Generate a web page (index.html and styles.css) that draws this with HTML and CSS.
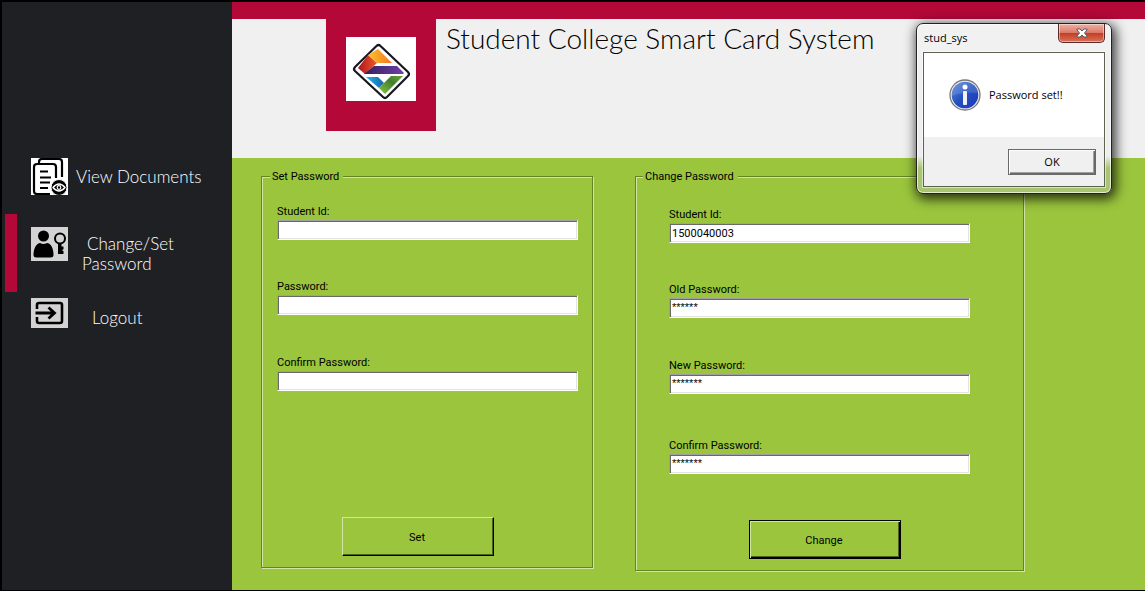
FILE: index.html
```html
<!DOCTYPE html>
<html lang="en">
<head>
<meta charset="utf-8">
<title>Student College Smart Card System</title>
<link rel="stylesheet" href="styles.css">
</head>
<body>
<div class="app">
  <nav class="sidebar">
    <a class="nav-item" href="#documents">
      <svg class="nav-icon" width="37" height="37" viewBox="0 0 37 37" aria-hidden="true">
        <rect width="37" height="37" fill="#fff"/>
        <g fill="none" stroke="#000" stroke-width="2.2">
          <path d="M8 5V4q0-3 3-3h17q3 0 3 3v15"/>
          <path d="M25 20V9q0-3-3-3H6Q3 6 3 9v24q0 3 3 3h13"/>
          <path d="M9 13.500h8M9 19.500h11M9 24.500h10M9 30h8"/>
        </g>
        <circle cx="28" cy="29.500" r="8" fill="#000" stroke="#fff"/>
        <path d="M22 29.500q6-7 12 0q-6 7-12 0z" fill="none" stroke="#fff" stroke-width="1.400"/>
        <circle cx="28" cy="29.500" r="1.800" fill="none" stroke="#fff" stroke-width="1.200"/>
      </svg>
      <span class="nav-text nav-text-documents">View Documents</span>
    </a>
    <a class="nav-item active" href="#password" aria-current="page">
      <svg class="nav-icon" width="37" height="34" viewBox="0 0 37 34" aria-hidden="true">
        <rect width="37" height="34" fill="#d3d3d3"/>
        <circle cx="12.500" cy="9" r="5.500"/>
        <path d="M2.500 28c0-8 4-12 6.500-12q3.500 2 7 0c3 0 6.500 4 6.500 12q0 2.500-3 2.500h-14q-3 0-3-2.500z"/>
        <circle cx="29" cy="11.500" r="5" fill="none" stroke="#000" stroke-width="2"/>
        <path d="M27 17h3.500v2.500h2v3h-1v1.500h1v3H27z"/>
      </svg>
      <span class="nav-text nav-text-password">Change/Set Password</span>
    </a>
    <a class="nav-item" href="#logout">
      <svg class="nav-icon" width="37" height="30" viewBox="0 0 37 30" aria-hidden="true">
        <rect width="37" height="30" fill="#d3d3d3"/>
        <path d="M6 11V7q0-2 2-2h21q2 0 2 2v16q0 2-2 2H8q-2 0-2-2v-4" fill="none" stroke="#000" stroke-width="2.600"/>
        <path d="M4.500 15h19M17.500 9.500l6 5.500-6 5.500" fill="none" stroke="#000" stroke-width="2.800"/>
      </svg>
      <span class="nav-text nav-text-logout">Logout</span>
    </a>
  </nav>

  <div class="content">
    <header class="header">
      <div class="logo">
        <svg width="70" height="64" viewBox="0 0 70 64" role="img" aria-label="College logo">
          <defs>
            <linearGradient id="red"><stop stop-color="#b0121d"/><stop offset="1" stop-color="#ee5a2a"/></linearGradient>
            <linearGradient id="orange"><stop stop-color="#fdc02e"/><stop offset="1" stop-color="#f47721"/></linearGradient>
            <linearGradient id="purple"><stop stop-color="#30205e"/><stop offset="1" stop-color="#7140a8"/></linearGradient>
            <linearGradient id="blue"><stop stop-color="#22b5ef"/><stop offset="1" stop-color="#1464a8"/></linearGradient>
            <linearGradient id="green" x1="0" y1="1" x2="1" y2="0"><stop stop-color="#8ac43f"/><stop offset=".6" stop-color="#40802d"/><stop offset="1" stop-color="#70a33a"/></linearGradient>
          </defs>
          <rect width="70" height="64" fill="#fff"/>
          <path d="M30.500 9q2-2 4 0L62 35q2 2 0 4L41 60q-2 2-4 0L9 34q-2-2 0-4z" fill="#fff" stroke="#171621" stroke-width="2.200"/>
          <path d="M22 18l9 8L19 37l-7-6z" fill="url(#red)"/>
          <path d="M22 18l10-6 14 14H31z" fill="url(#orange)"/>
          <path d="M28 29h23l7 7-1 1H18z" fill="url(#purple)"/>
          <path d="M20 40h12l6 6-5 5z" fill="url(#blue)"/>
          <path d="M45 39h12L39 57l-6-6z" fill="url(#green)"/>
        </svg>
      </div>
      <h1 class="title">Student College Smart Card System</h1>
    </header>

    <main class="panels">
      <form class="panel-form">
        <fieldset class="panel panel-set">
          <legend>Set Password</legend>
          <div class="field"><label for="set-id">Student Id:</label><input id="set-id" type="text"></div>
          <div class="field"><label for="set-pass">Password:</label><input id="set-pass" type="password"></div>
          <div class="field"><label for="set-confirm">Confirm Password:</label><input id="set-confirm" type="password"></div>
          <button class="action" type="button">Set</button>
        </fieldset>
      </form>
      <form class="panel-form">
        <fieldset class="panel panel-change">
          <legend>Change Password</legend>
          <div class="field"><label for="change-id">Student Id:</label><input id="change-id" type="text" value="1500040003"></div>
          <div class="field"><label for="old-pass">Old Password:</label><input class="masked" id="old-pass" type="text" value="******"></div>
          <div class="field field-last"><label for="new-pass">New Password:</label><input class="masked" id="new-pass" type="text" value="*******"></div>
          <div class="field"><label for="change-confirm">Confirm Password:</label><input class="masked" id="change-confirm" type="text" value="*******"></div>
          <button class="action default" type="button">Change</button>
        </fieldset>
      </form>
    </main>
  </div>
</div>

<section class="dialog" role="dialog" aria-labelledby="dialog-title">
  <header class="dialog-bar">
    <h2 class="dialog-title" id="dialog-title">stud_sys</h2>
    <button class="close" type="button" aria-label="Close">
      <svg width="12" height="10" viewBox="0 0 12 10" aria-hidden="true">
        <path d="M1 1h3l2 2 2-2h3v1L8.500 5 11 8v1H8L6 7 4 9H1V8l2.500-3L1 2z" fill="#fff" stroke="#555a68"/>
      </svg>
    </button>
  </header>
  <div class="dialog-body">
    <div class="message">
      <svg width="32" height="32" viewBox="0 0 32 32" aria-hidden="true">
        <defs><linearGradient id="info" x1="0" y1="0" x2="1" y2="1"><stop stop-color="#5b86e0"/><stop offset=".5" stop-color="#2450bd"/><stop offset="1" stop-color="#1b35c4"/></linearGradient></defs>
        <circle cx="16" cy="16" r="15" fill="#eee" stroke="#777" stroke-width="1.300"/>
        <circle cx="16" cy="16" r="13.300" fill="url(#info)"/>
        <path d="M3 17a13 13 0 0 1 26-3Q15 12 3 17z" fill="#fff" opacity=".14"/>
        <circle cx="16" cy="8" r="2.500" fill="#fff"/>
        <rect x="14" y="12" width="4" height="14" rx="1" fill="#f1f1f1"/>
      </svg>
      <p>Password set!!</p>
    </div>
    <div class="dialog-actions"><button class="ok" type="button">OK</button></div>
  </div>
</section>
</body>
</html>
```
FILE: styles.css
```css
* { box-sizing: border-box; }

body {
  margin: 0;
  font-family: "Microsoft Sans Serif", Roboto, "Liberation Sans", sans-serif;
  font-size: 11px;
  color: #000;
}

.app {
  display: flex;
  min-height: 100vh;
  border: solid #000;
  border-width: 2px 0 1px 2px;
  background: #9bc53d;
}

.sidebar {
  flex: 0 0 230px;
  padding: 137px 0 0 3px;
  background: #1f2024;
  font-family: "Century Gothic", Lato, sans-serif;
  font-size: 17px;
  font-weight: 300;
  line-height: 20px;
}

.nav-item {
  display: flex;
  align-items: center;
  height: 75px;
  padding-left: 14px;
  border-left: 12px solid transparent;
  color: #fff;
  text-decoration: none;
}

.nav-item.active {
  align-items: flex-start;
  height: 78px;
  padding-top: 13px;
  border-left-color: #b30838;
}

.nav-item:last-child {
  align-items: flex-end;
  height: 36px;
}

.nav-icon { flex: none; }
.nav-text-documents { margin-left: 8px; }
.nav-text-password { width: 110px; margin: 7px 0 0 14px; text-indent: 5px; }
.nav-text-logout { margin-left: 24px; }

.content {
  flex: 1;
  display: flex;
  flex-direction: column;
}

.header {
  display: flex;
  align-items: flex-start;
  height: 156px;
  padding-left: 94px;
  border-top: 17px solid #b30838;
  background: #f0f0f0;
}

.logo {
  padding: 18px 20px 30px;
  background: #b30838;
}

.logo svg { display: block; }

.title {
  margin: 3px 0 0 10px;
  font-family: "Century Gothic", Lato, sans-serif;
  font-size: 28px;
  font-weight: 300;
  line-height: 32px;
}

.panels {
  flex: 1;
  display: flex;
  align-items: flex-start;
  gap: 42px;
  padding: 10px 29px 19px;
  background: #9bc53d;
}

.panel {
  min-width: 0;
  margin: 0;
  border: 1px solid #668425;
  box-shadow: 1px 1px #d2e5a7, inset 1px 1px #d2e5a7;
}

.panel-set { width: 332px; padding: 20px 15px 11px; }
.panel-change { width: 389px; padding: 23px 33px 11px; }

.panel legend {
  margin-left: -7px;
  padding: 2px 4px 0 2px;
  line-height: 14px;
  background: #9bc53d;
}
.panel-change legend { margin-left: -26px; }

.field {
  display: flex;
  flex-direction: column;
  width: 301px;
  margin-bottom: 39px;
}
.field:nth-of-type(2) { margin-bottom: 40px; }
.field-last { margin-bottom: 44px; }

.field label {
  height: 16px;
  line-height: 16px;
}

.field input {
  width: 100%;
  height: 20px;
  padding: 0 2px;
  border: 1px solid;
  border-color: #a0a0a0 #fff #fff #a0a0a0;
  border-radius: 0;
  outline: 0;
  background: #fff;
  box-shadow: inset 1px 1px #696969, inset -1px -1px #e3e3e3;
  font: inherit;
}

.field .masked {
  padding-bottom: 3px;
  font-family: "Liberation Sans", Arial, sans-serif;
}

.action {
  display: block;
  width: 152px;
  height: 39px;
  margin: 126px 0 0 65px;
  padding: 1px 2px 0 0;
  border: 1px solid;
  border-color: #d2e5a7 #000 #000 #d2e5a7;
  background: #9bc53d;
  box-shadow: inset -1px -1px #4d621e;
  font: inherit;
}

.action.default {
  margin: 46px 0 0 80px;
  border-color: #000;
  box-shadow: inset 1px 1px #d2e5a7, inset -1px -1px #000, inset -2px -2px #4d621e;
}

.dialog {
  position: absolute;
  top: 23px;
  left: 916px;
  width: 196px;
  padding: 0 6px 6px;
  border: 1px solid #222;
  border-radius: 7px;
  background: linear-gradient(#f2f2f2 0, #ededed 132px, #a8c66f 144px, #a9c66f);
  box-shadow: inset 0 0 0 1px #ffffffb0, 2px 3px 12px 2px #000000c0;
  font-family: "Segoe UI", "Open Sans", sans-serif;
  font-size: 11px;
}

.dialog-bar {
  display: flex;
  justify-content: space-between;
  height: 28px;
}

.dialog-title {
  margin: 5px 0 0 1px;
  font-size: 11px;
  font-weight: 400;
  line-height: 18px;
}

.close {
  display: grid;
  place-items: center;
  width: 47px;
  height: 19px;
  padding: 0;
  border: 1px solid #5a2a28;
  border-top: 0;
  border-radius: 0 0 5px 5px;
  background: linear-gradient(#eeb0a4, #dc7a68 48%, #c43c24 50%, #d87258);
  box-shadow: inset 0 0 0 1px #ffffff70;
}

.dialog-body {
  border: 1px solid #5c6150;
  background: #f0f0f0;
  box-shadow: 0 0 0 1px #ffffff90;
}

.message {
  display: flex;
  align-items: center;
  gap: 8px;
  height: 84px;
  padding-left: 25px;
  background: #fff;
}

.message p { margin: 0; line-height: 14px; }

.dialog-actions {
  display: flex;
  justify-content: flex-end;
  padding: 12px 8px 11px;
}

.ok {
  width: 88px;
  height: 26px;
  padding: 0 0 1px;
  border: 1px solid #696969;
  background: #f0f0f0;
  box-shadow: inset 1px 1px #fff, inset -1px -1px #696969, inset -2px -2px #a0a0a0;
  font: inherit;
}
```
